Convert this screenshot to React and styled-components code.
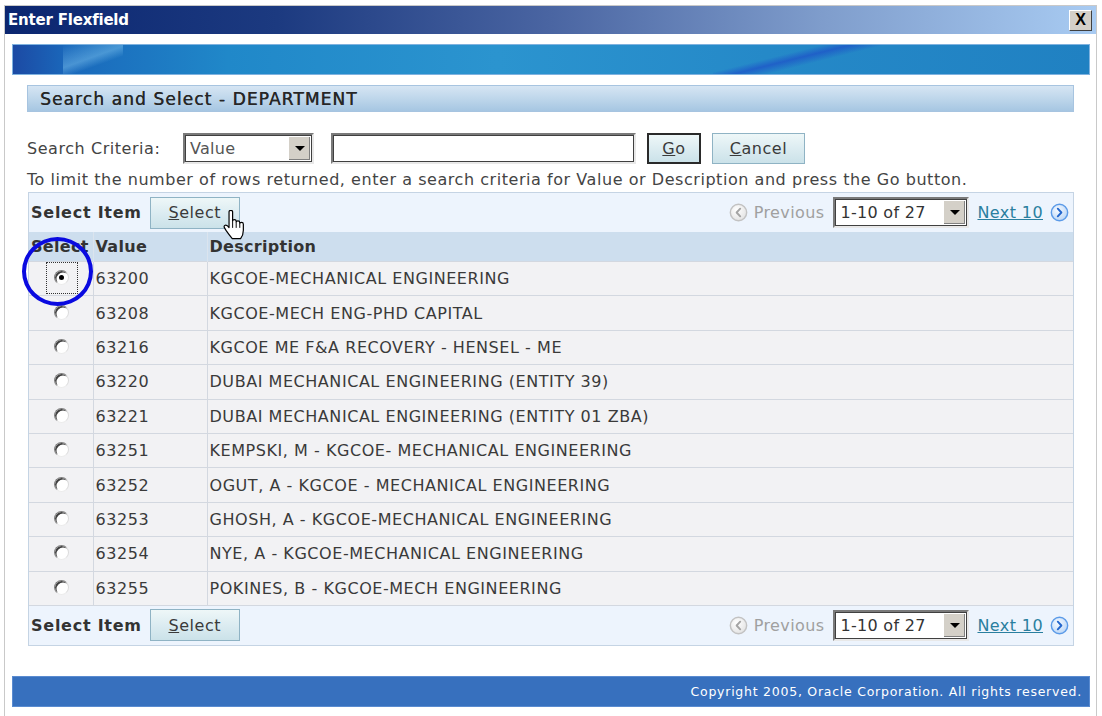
import React from "react";
import styled, { createGlobalStyle } from "styled-components";

const GlobalStyle = createGlobalStyle`
  html, body {
    margin: 0;
    padding: 0;
    background: #ffffff;
  }
  body {
    font-family: "DejaVu Sans", "Noto Sans", sans-serif;
    color: #333333;
  }
`;

const Page = styled.div`
  width: 1102px;
  height: 716px;
  padding: 5px 5px 0 4px;
  box-sizing: border-box;
  overflow: hidden;
`;

const Window = styled.div`
  height: 720px;
  border: 1px solid #c9c9c9;
  border-bottom: none;
  background: #fff;
`;

const TitleBar = styled.div`
  height: 28px;
  display: flex;
  align-items: center;
  justify-content: space-between;
  padding: 0 4px 0 3px;
  background: linear-gradient(to right, #0b2670 0%, #1c3a80 25%, #4a65a2 50%, #7f9dcc 75%, #a8cbf2 100%);
`;

const TitleText = styled.span`
  color: #fff;
  font-weight: bold;
  font-size: 15px;
  letter-spacing: -0.2px;
`;

const CloseBox = styled.div`
  width: 21px;
  height: 19px;
  background: #d4d0c8;
  border: 1px solid;
  border-color: #ffffff #404040 #404040 #ffffff;
  display: flex;
  align-items: center;
  justify-content: center;
  font: bold 16px "Liberation Sans", Arial, sans-serif;
  color: #000;
`;

const Body = styled.div`
  padding: 10px 6px 0 7px;
`;

const Banner = styled.div`
  height: 31px;
  border: 1px solid #7fb2df;
  box-sizing: border-box;
  background:
    linear-gradient(166deg, transparent 0%, transparent 38%, rgba(28, 70, 200, 0.6) 48%, transparent 60%) 700px 0 / 170px 100% no-repeat,
    linear-gradient(160deg, transparent 0%, rgba(120, 190, 235, 0.5) 45%, transparent 65%) 50px 0 / 60px 100% no-repeat,
    linear-gradient(to right, #1c4aa4 0%, #1a68bb 5%, #2088c9 20%, #2b94cf 45%, #2589c8 70%, #2081c2 100%);
`;

const Content = styled.div`
  margin: 10px 16px 0 15px;
  letter-spacing: 0.55px;
`;

const SectionHeader = styled.div`
  height: 27px;
  box-sizing: border-box;
  border: 1px solid #a7c4e0;
  background: linear-gradient(to bottom, #d6e5f3 0%, #bcd5ea 55%, #a6c6e2 100%);
  display: flex;
  align-items: center;
  padding-left: 12px;
  font-size: 17px;
  color: #262626;
  letter-spacing: 1.1px;
  text-shadow: 0.4px 0 0 #333;
`;

const SearchRow = styled.div`
  display: flex;
  align-items: center;
  margin-top: 21px;
  height: 31px;
  font-size: 16px;
  color: #444;
`;

const Label = styled.span`
  width: 156px;
`;

const DropBox = styled.div`
  width: ${(p) => p.w}px;
  height: ${(p) => p.h}px;
  box-sizing: border-box;
  border: 2px solid;
  border-color: #7a7a7a #e8e8e8 #e8e8e8 #7a7a7a;
  outline: 1px solid #404040;
  outline-offset: -3px;
  background: #fff;
  display: flex;
  align-items: center;
  justify-content: space-between;
  padding-left: 5px;
  font-size: 16px;
  letter-spacing: 0.3px;
  color: ${(p) => p.color || "#555"};
  margin-right: ${(p) => p.mr || 0}px;
`;

const Arrow = styled.div`
  width: 21px;
  height: calc(100% - 4px);
  margin-right: 2px;
  background: #d4d0c8;
  border-left: 1px solid #ffffff;
  box-shadow: inset -1px -1px 0 #808080;
  display: flex;
  align-items: center;
  justify-content: center;
  &::after {
    content: "";
    border-left: 5px solid transparent;
    border-right: 5px solid transparent;
    border-top: 5px solid #000;
  }
`;

const TextInput = styled.div`
  width: 305px;
  height: 31px;
  box-sizing: border-box;
  border: 2px solid;
  border-color: #7a7a7a #e8e8e8 #e8e8e8 #7a7a7a;
  outline: 1px solid #404040;
  outline-offset: -3px;
  background: #fff;
  margin-right: 11px;
`;

const Button = styled.div`
  height: ${(p) => p.h || 31}px;
  width: ${(p) => p.w}px;
  box-sizing: border-box;
  border: ${(p) => (p.dark ? "2px solid #2a2a2a" : "1px solid #8fb3c4")};
  background: linear-gradient(to bottom, #eef7f8 0%, #dcecf1 50%, #cbe2e9 100%);
  display: flex;
  align-items: center;
  justify-content: center;
  font-size: 16px;
  color: #3a3a3a;
  margin-right: ${(p) => p.mr || 0}px;
  & u {
    text-decoration: underline;
  }
`;

const Hint = styled.div`
  font-size: 16px;
  color: #444;
  height: 28px;
  line-height: 32px;
  white-space: nowrap;
`;

const Results = styled.div`
  margin-left: 1px;
  border: 1px solid #c5d4e4;
  position: relative;
`;

const ControlBar = styled.div`
  height: 39px;
  background: #edf4fd;
  display: flex;
  align-items: center;
  justify-content: space-between;
  padding: 0 4px 0 2px;
  position: relative;
`;

const BarLeft = styled.div`
  display: flex;
  align-items: center;
`;

const BarLabel = styled.span`
  font-weight: bold;
  font-size: 16px;
  color: #333;
  margin-right: 8px;
  letter-spacing: 0.75px;
`;

const Pager = styled.div`
  display: flex;
  align-items: center;
  font-size: 16px;
`;

const PagerIcon = styled.svg`
  width: 19px;
  height: 19px;
  margin: ${(p) => p.m};
  flex-shrink: 0;
`;

const PrevText = styled.span`
  color: #a0a0a0;
  margin-right: 9px;
  letter-spacing: 0.4px;
`;

const NextLink = styled.a`
  color: #2a7f9f;
  text-decoration: underline;
  margin-left: 8px;
  letter-spacing: 0.4px;
`;

const Grid = styled.table`
  width: 100%;
  border-collapse: collapse;
  font-size: 16px;
`;

const HeadCell = styled.th`
  background: #cddeee;
  height: 29px;
  padding: 0 0 0 2px;
  text-align: left;
  font-weight: bold;
  color: #333;
  border-left: 1px solid #dbe4ee;
  white-space: nowrap;
  letter-spacing: 0.3px;
  &:first-child {
    border-left: none;
  }
`;

const Cell = styled.td`
  background: #f2f2f4;
  height: 33.4px;
  padding: 0 0 0 2px;
  color: #3a3a3a;
  border: 1px solid #d3d8e0;
  white-space: nowrap;
  &:first-child {
    border-left: none;
    text-align: center;
  }
  &:last-child {
    border-right: none;
  }
`;

const FocusRing = styled.div`
  display: inline-flex;
  width: 32px;
  height: 32px;
  box-sizing: border-box;
  border: 1px dotted ${(p) => (p.on ? "#333" : "transparent")};
  align-items: center;
  justify-content: center;
  vertical-align: middle;
  margin-top: -2px;
`;

const Radio = styled.div`
  width: 15px;
  height: 15px;
  border-radius: 50%;
  box-sizing: border-box;
  border: 1px solid;
  border-color: #7f7f7f #dcdcdc #ececec #7f7f7f;
  background: #fff;
  box-shadow: inset 1.5px 1.5px 0 #404040;
  display: flex;
  align-items: center;
  justify-content: center;
  &::after {
    content: "";
    width: 5px;
    height: 5px;
    border-radius: 50%;
    background: ${(p) => (p.checked ? "#000" : "transparent")};
  }
`;

const Annotation = styled.div`
  position: absolute;
  left: -7px;
  top: 44px;
  width: 71px;
  height: 69px;
  box-sizing: border-box;
  border: 4px solid #0a0ae0;
  border-radius: 50%;
  pointer-events: none;
`;

const Cursor = styled.svg`
  position: absolute;
  left: 194px;
  top: 17px;
  width: 24px;
  height: 31px;
  pointer-events: none;
`;

const Footer = styled.div`
  margin-top: 30px;
  height: 31px;
  background: #3770be;
  border: 1px solid #5a8bd0;
  box-sizing: border-box;
  display: flex;
  align-items: center;
  justify-content: flex-end;
  padding-right: 7px;
  color: #fff;
  font-size: 12.5px;
  letter-spacing: 0.75px;
`;

const rows = [
  ["63200", "KGCOE-MECHANICAL ENGINEERING"],
  ["63208", "KGCOE-MECH ENG-PHD CAPITAL"],
  ["63216", "KGCOE ME F&A RECOVERY - HENSEL - ME"],
  ["63220", "DUBAI MECHANICAL ENGINEERING (ENTITY 39)"],
  ["63221", "DUBAI MECHANICAL ENGINEERING (ENTITY 01 ZBA)"],
  ["63251", "KEMPSKI, M - KGCOE- MECHANICAL ENGINEERING"],
  ["63252", "OGUT, A - KGCOE - MECHANICAL ENGINEERING"],
  ["63253", "GHOSH, A - KGCOE-MECHANICAL ENGINEERING"],
  ["63254", "NYE, A - KGCOE-MECHANICAL ENGINEERING"],
  ["63255", "POKINES, B - KGCOE-MECH ENGINEERING"],
];

const PrevIcon = () => (
  <PagerIcon viewBox="0 0 20 20" m="0 6px 0 0">
    <defs>
      <radialGradient id="pg" cx="40%" cy="35%" r="70%">
        <stop offset="0" stopColor="#ffffff" />
        <stop offset="1" stopColor="#e2e2e2" />
      </radialGradient>
    </defs>
    <circle cx="10" cy="10" r="8.6" fill="url(#pg)" stroke="#c2c2c2" strokeWidth="1.5" />
    <path d="M11.8 6 L8 10 L11.8 14" fill="none" stroke="#a4a4a4" strokeWidth="2" strokeLinecap="round" strokeLinejoin="round" />
  </PagerIcon>
);

const NextIcon = () => (
  <PagerIcon viewBox="0 0 20 20" m="0 0 0 7px">
    <defs>
      <radialGradient id="ng" cx="40%" cy="35%" r="70%">
        <stop offset="0" stopColor="#f6faff" />
        <stop offset="1" stopColor="#b9d5f6" />
      </radialGradient>
    </defs>
    <circle cx="10" cy="10" r="8.6" fill="url(#ng)" stroke="#5c9be8" strokeWidth="1.5" />
    <path d="M8.2 6 L12 10 L8.2 14" fill="none" stroke="#2366cc" strokeWidth="2" strokeLinecap="round" strokeLinejoin="round" />
  </PagerIcon>
);

const Bar = ({ withCursor }) => (
  <ControlBar>
    <BarLeft>
      <BarLabel>Select Item</BarLabel>
      <Button w={90} h={32}>
        <span>
          <u>S</u>elect
        </span>
      </Button>
    </BarLeft>
    <Pager>
      <PrevIcon />
      <PrevText>Previous</PrevText>
      <DropBox w={136} h={31} color="#333">
        1-10 of 27
        <Arrow />
      </DropBox>
      <NextLink>Next 10</NextLink>
      <NextIcon />
    </Pager>
    {withCursor && (
      <Cursor viewBox="0 0 20 26">
        <path
          d="M5 1.5 Q5 0.3 6.5 0.3 Q8 0.3 8 1.5 V9 Q8 8 9.5 8 Q11 8 11 9.5 V10.2 Q11 9.2 12.5 9.2 Q14 9.2 14 10.7 V11.4 Q14 10.4 15.5 10.4 Q17 10.4 17 11.9 V17 Q17 21 14.7 24 H7.7 Q5.2 21 2.6 17.3 L1.1 14.8 Q0.4 13.3 1.8 12.8 Q3.3 12.4 5 14.7 Z"
          fill="#fff"
          stroke="#000"
          strokeWidth="1"
          strokeLinejoin="round"
        />
        <path d="M11 10.5 V15 M14 11.7 V15 M8 9 V15" stroke="#000" strokeWidth="0.8" fill="none" />
      </Cursor>
    )}
  </ControlBar>
);

export default function App() {
  return (
    <Page>
      <GlobalStyle />
      <Window>
        <TitleBar>
          <TitleText>Enter Flexfield</TitleText>
          <CloseBox>X</CloseBox>
        </TitleBar>
        <Body>
          <Banner />
          <Content>
            <SectionHeader>Search and Select - DEPARTMENT</SectionHeader>
            <SearchRow>
              <Label>Search Criteria:</Label>
              <DropBox w={131} h={31} mr={17}>
                Value
                <Arrow />
              </DropBox>
              <TextInput />
              <Button w={54} dark mr={11}>
                <span>
                  <u>G</u>o
                </span>
              </Button>
              <Button w={93}>
                <span>
                  <u>C</u>ancel
                </span>
              </Button>
            </SearchRow>
            <Hint>
              To limit the number of rows returned, enter a search criteria for Value or Description and press the Go button.
            </Hint>
            <Results>
              <Bar withCursor />
              <Grid>
                <colgroup>
                  <col style={{ width: 64 }} />
                  <col style={{ width: 114 }} />
                  <col />
                </colgroup>
                <thead>
                  <tr>
                    <HeadCell>Select</HeadCell>
                    <HeadCell>Value</HeadCell>
                    <HeadCell>Description</HeadCell>
                  </tr>
                </thead>
                <tbody>
                  {rows.map(([value, desc], i) => (
                    <tr key={value}>
                      <Cell>
                        <FocusRing on={i === 0}>
                          <Radio checked={i === 0} />
                        </FocusRing>
                      </Cell>
                      <Cell>{value}</Cell>
                      <Cell>{desc}</Cell>
                    </tr>
                  ))}
                </tbody>
              </Grid>
              <Bar />
              <Annotation />
            </Results>
          </Content>
          <Footer>Copyright 2005, Oracle Corporation. All rights reserved.</Footer>
        </Body>
      </Window>
    </Page>
  );
}
